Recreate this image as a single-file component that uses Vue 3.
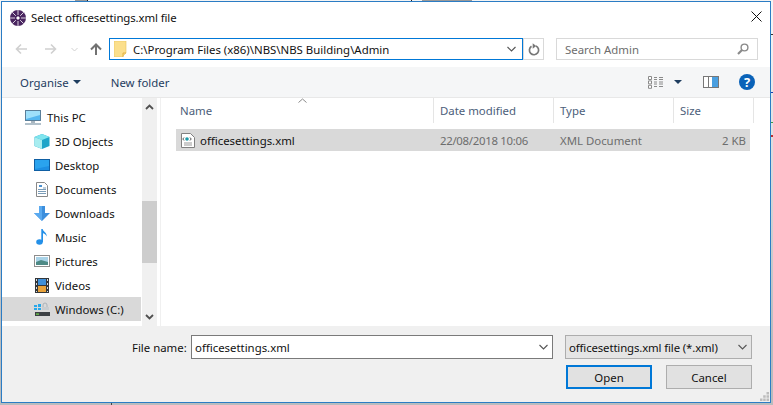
<script setup>
const places = [
  { name: 'This PC', icon: 'pc', top: true },
  { name: '3D Objects', icon: 'cube' },
  { name: 'Desktop', icon: 'desktop' },
  { name: 'Documents', icon: 'docs' },
  { name: 'Downloads', icon: 'down' },
  { name: 'Music', icon: 'music' },
  { name: 'Pictures', icon: 'pics' },
  { name: 'Videos', icon: 'video' },
  { name: 'Windows (C:)', icon: 'drive', selected: true }
]
const columns = ['Name', 'Date modified', 'Type', 'Size']
</script>

<template>
  <div class="screen">
    <section class="win">
      <header class="title">
        <svg class="logo" width="16" height="16" viewBox="0 0 16 16">
          <circle cx="8" cy="8" r="8" fill="#4a2660" />
          <path d="M8 0v5M8 11v5M0 8h5M11 8h5M2.300 2.300l3.500 3.500M10.200 10.200l3.500 3.500M13.700 2.300l-3.500 3.500M5.800 10.200l-3.500 3.500" stroke="#efe9f2" stroke-width=".9" />
          <path d="M8 6L10 8 8 10 6 8z" fill="#fff" />
        </svg>
        <span class="title-text">Select officesettings.xml file</span>
        <svg class="close" width="11" height="11" viewBox="0 0 11 11">
          <path d="M.5.500l10 10M10.500.5l-10 10" stroke="#111" stroke-width="1" fill="none" />
        </svg>
      </header>

      <div class="nav">
        <div class="nav-btns">
          <svg width="12" height="12" viewBox="0 0 12 12"><path d="M12 6H1.500M6 1.500L1.500 6 6 10.500" fill="none" stroke="#d0d0d0" stroke-width="1.600" /></svg>
          <svg class="fwd" width="12" height="12" viewBox="0 0 12 12"><path d="M0 6h10.500M6 1.500L10.500 6 6 10.500" fill="none" stroke="#d0d0d0" stroke-width="1.600" /></svg>
          <svg class="drop" width="7" height="5" viewBox="0 0 7 5"><path d="M.5 1L3.500 4l3-3" fill="none" stroke="#d0d0d0" stroke-width="1" /></svg>
          <svg class="upb" width="12" height="12" viewBox="0 0 12 12"><path d="M6 12V2M1 6.500L6 1.500l5 5" fill="none" stroke="#727272" stroke-width="2" /></svg>
        </div>
        <div class="address">
          <svg class="folder" width="13" height="16" viewBox="0 0 13 16">
            <path d="M0 0h12v12l-4 4H0z" fill="#fbdf8c" stroke="#e8c35a" stroke-width=".6" />
            <path d="M9 16v-4h3" fill="none" stroke="#e0b040" />
          </svg>
          <span class="path">C:\Program Files (x86)\NBS\NBS Building\Admin</span>
          <svg width="9" height="6" viewBox="0 0 9 6"><path d="M.5 1L4.500 5l4-4" fill="none" stroke="#555" stroke-width="1.100" /></svg>
        </div>
        <div class="refresh">
          <svg width="12" height="13" viewBox="0 0 12 13"><path d="M3.500 3.300A4.600 4.600 0 1 0 8 3" fill="none" stroke="#777" stroke-width="1.700" /><path d="M7.300 .3v5.400L3.800 3z" fill="#777" transform="rotate(180 6 3)" /></svg>
        </div>
        <div class="search">
          <span>Search Admin</span>
          <svg width="12" height="12" viewBox="0 0 12 12"><circle cx="7.500" cy="4.500" r="3.400" fill="none" stroke="#8a8a8a" stroke-width="1.400" /><path d="M5 7L1 11" stroke="#8a8a8a" stroke-width="2.200" /></svg>
        </div>
      </div>

      <div class="toolbar">
        <span class="tool">Organise</span>
        <i class="caret" />
        <span class="tool newf">New folder</span>
        <span class="spacer" />
        <svg class="views" width="16" height="13" viewBox="0 0 16 13">
          <g fill="#fff" stroke="#8a8a8a"><path d="M.5.500h3v3h-3zM.5 4.900h3v3h-3zM.5 9.300h3v3h-3z" /></g>
          <path d="M6 1.500h3M11 1.500h4M6 3.500h3M11 3.500h4M6 6h3M11 6h4M6 8h3M11 8h4M6 10.500h3M11 10.500h4" stroke="#8a8a8a" />
        </svg>
        <i class="caret dark" />
        <svg class="panes" width="16" height="12" viewBox="0 0 16 12">
          <rect x=".5" y=".5" width="15" height="11" fill="#fff" stroke="#777" />
          <path d="M5.500 1v10" stroke="#777" />
          <rect x="9" y="1" width="6" height="10" fill="#4a9fe0" />
        </svg>
        <span class="help">?</span>
      </div>

      <div class="main">
        <aside class="side">
          <ul class="places">
            <li v-for="p in places" :key="p.name" class="place" :class="{ top: p.top, sel: p.selected }">
              <svg v-if="p.icon === 'pc'" width="16" height="15" viewBox="0 0 16 15">
                <rect x=".5" y=".5" width="15" height="10" fill="#56b7f0" stroke="#5a7f9a" />
                <path d="M1 1h14v4L1 9z" fill="#9fe0fb" />
                <path d="M6 11h4v2H6z" fill="#a9b6c0" />
                <path d="M0 14h16" stroke="#7f97a8" stroke-width="1.200" />
              </svg>
              <svg v-else-if="p.icon === 'cube'" width="16" height="15" viewBox="0 0 16 15">
                <path d="M8 0l7.500 3v9L8 15 .5 12V3z" fill="#1fa5c9" />
                <path d="M8 0l7.500 3L8 6 .5 3z" fill="#7fe5ee" />
                <path d="M.5 3L8 6v9L.5 12z" fill="#a8edf0" />
              </svg>
              <svg v-else-if="p.icon === 'desktop'" width="16" height="12" viewBox="0 0 16 12">
                <rect x=".5" y=".5" width="15" height="11" fill="#1d8fe3" stroke="#0f5fa3" />
                <path d="M1 1h14v6L1 10z" fill="#2aa3ee" />
              </svg>
              <svg v-else-if="p.icon === 'docs'" width="12" height="15" viewBox="0 0 12 15">
                <path d="M.5.500h8l3 3v11H.5z" fill="#fff" stroke="#888" />
                <path d="M3 3h3v2H3z" fill="#4a90d0" />
                <path d="M7 6h3M2 7.500h8M2 9.500h8M2 11.500h8" stroke="#7a9cb8" />
              </svg>
              <svg v-else-if="p.icon === 'down'" width="16" height="15" viewBox="0 0 16 15">
                <path d="M5 0h6v7h5l-8 8-8-8h5z" fill="#3d8fdd" />
                <path d="M5 0h3v15L0 7h5z" fill="#5aaaf0" />
              </svg>
              <svg v-else-if="p.icon === 'music'" width="12" height="16" viewBox="0 0 12 16">
                <ellipse cx="3.500" cy="13" rx="3.300" ry="2.700" fill="#2490e8" />
                <path d="M5.300 13V0h1.400c.4 3 4.300 3.400 4 7.500-.7-2-2.500-3-3.700-3.200V13z" fill="#2490e8" />
              </svg>
              <svg v-else-if="p.icon === 'pics'" width="16" height="12" viewBox="0 0 16 12">
                <rect x=".5" y=".5" width="15" height="11" fill="#fff" stroke="#8d8d8d" />
                <rect x="2" y="2" width="12" height="8" fill="#a9d3e8" />
                <path d="M2 7l5-2 7 2v3H2z" fill="#4e8a86" />
              </svg>
              <svg v-else-if="p.icon === 'video'" width="14" height="15" viewBox="0 0 14 15">
                <rect width="14" height="15" fill="#33363a" />
                <rect x="3" y="1" width="8" height="6" fill="#3f8fd8" />
                <rect x="3" y="8" width="8" height="6" fill="#e8a23a" />
                <path d="M1 1h1v2H1zM1 5h1v2H1zM1 9h1v2H1zM1 13h1v1H1zM12 1h1v2h-1zM12 5h1v2h-1zM12 9h1v2h-1zM12 13h1v1h-1z" fill="#ddd" />
              </svg>
              <svg v-else width="16" height="15" viewBox="0 0 16 15">
                <path d="M0 3h3v2H0zM4 2h3v3H4zM0 6h3v2H0zM4 6h3v2H4z" fill="#28a8ea" />
                <path d="M9 5V3a2 2 0 0 1 4 0v2" fill="none" stroke="#aab2b8" />
                <rect x="8" y="5" width="7" height="3" fill="#c8cdd0" />
                <rect x="1" y="10" width="15" height="4" fill="#3c4044" />
                <rect x="2" y="11.500" width="3" height="1.200" fill="#6fd84a" />
              </svg>
              <span class="place-name">{{ p.name }}</span>
            </li>
          </ul>
          <div class="vbar">
            <svg class="arrow" width="9" height="6" viewBox="0 0 9 6"><path d="M1 5l3.500-3.500L8 5" fill="none" stroke="#505050" stroke-width="1.800" /></svg>
            <div class="thumb" />
            <svg class="arrow" width="9" height="6" viewBox="0 0 9 6"><path d="M1 1l3.500 3.500L8 1" fill="none" stroke="#505050" stroke-width="1.800" /></svg>
          </div>
        </aside>

        <div class="files">
          <div class="heads">
            <svg class="sort" width="9" height="5" viewBox="0 0 9 5"><path d="M.5 4.500l4-3.500 4 3.500" fill="none" stroke="#8a8a8a" /></svg>
            <div v-for="c in columns" :key="c" class="head">{{ c }}</div>
          </div>
          <div class="row">
            <div class="cell namecell">
              <svg width="14" height="15" viewBox="0 0 14 15">
                <path d="M.5.500h9l4 4v10H.5z" fill="#fff" stroke="#808080" />
                <path d="M3 4.500L1.800 6 3 7.500M9 4.500L10.200 6 9 7.500" fill="none" stroke="#555" />
                <circle cx="6" cy="6" r="1.800" fill="#1c9aa8" />
                <path d="M3 10h8M3 12h8" stroke="#999" />
              </svg>
              <span>officesettings.xml</span>
            </div>
            <div class="cell muted date">22/08/2018 10:06</div>
            <div class="cell muted">XML Document</div>
            <div class="cell muted size">2 KB</div>
          </div>
        </div>
      </div>

      <footer class="foot">
        <div class="foot-row">
          <label class="fname-label">File name:</label>
          <div class="fname">
            <span class="grow">officesettings.xml</span>
            <svg width="9" height="6" viewBox="0 0 9 6"><path d="M.5 1L4.500 5l4-4" fill="none" stroke="#555" stroke-width="1.100" /></svg>
          </div>
          <div class="filter">
            <span class="grow tight">officesettings.xml file (*.xml)</span>
            <svg width="9" height="6" viewBox="0 0 9 6"><path d="M.5 1L4.500 5l4-4" fill="none" stroke="#555" stroke-width="1.100" /></svg>
          </div>
        </div>
        <div class="actions">
          <button class="btn primary">Open</button>
          <button class="btn">Cancel</button>
        </div>
        <svg class="grip" width="9" height="9" viewBox="0 0 9 9">
          <path d="M6.500 0h2.500v2.500H6.500zM3.200 3.200h2.500v2.500H3.200zM6.500 3.200h2.500v2.500H6.500zM0 6.500h2.500v2.500H0zM3.200 6.500h2.500v2.500H3.200zM6.500 6.500h2.500v2.500H6.500z" fill="#bcbcbc" />
        </svg>
      </footer>
    </section>
  </div>
</template>

<style scoped>
.screen {
  width: 773px;
  height: 405px;
  overflow: hidden;
  box-sizing: border-box;
  padding: 1px 2px 2px 1px;
  background:
    linear-gradient(#222, #222) 87px 0 / 1px 1px no-repeat,
    linear-gradient(#222, #222) 411px 0 / 1px 1px no-repeat,
    linear-gradient(#999, #999) 75px 0 / 12px 1px no-repeat,
    linear-gradient(#999, #999) 422px 0 / 50px 1px no-repeat,
    linear-gradient(#444, #444) 111px 403px / 1px 2px no-repeat,
    linear-gradient(#333, #333) 771px 34px / 2px 1px no-repeat,
    linear-gradient(#1a3fb0, #1a3fb0) 771px 92px / 2px 1px no-repeat,
    linear-gradient(#3a9a4a, #3a9a4a) 771px 122px / 2px 1px no-repeat,
    linear-gradient(#c03030, #c03030) 771px 135px / 2px 2px no-repeat,
    linear-gradient(#f4f4f4 0 20px, #b9bcbe 340px);
  font-family: "Noto Sans", "Open Sans", sans-serif;
  font-size: 11.4px;
  color: #111;
}
.win {
  width: 770px;
  height: 402px;
  box-sizing: border-box;
  border: 1px solid #2b7cc4;
  background: #fff;
  display: flex;
  flex-direction: column;
}
.title {
  height: 31px;
  flex: none;
  display: flex;
  align-items: center;
  padding: 0 8px 0 8px;
}
.logo { margin-right: 5px; }
.title-text { flex: 1; letter-spacing: -.1px; }
.close { margin-bottom: 3px; }
.nav {
  height: 34px;
  flex: none;
  display: flex;
  align-items: flex-start;
  padding: 5px 11px 0 13px;
  box-sizing: border-box;
}
.nav-btns {
  width: 94px;
  height: 22px;
  display: flex;
  align-items: center;
}
.fwd { margin-left: 18px; }
.drop { margin-left: 14px; }
.upb { margin-left: 12px; }
.address {
  width: 414px;
  height: 22px;
  box-sizing: border-box;
  border: 1px solid #0078d7;
  display: flex;
  align-items: center;
  padding: 0 6px 0 4px;
}
.folder { margin-right: 6px; }
.path { flex: 1; white-space: nowrap; }
.refresh {
  width: 21px;
  height: 22px;
  box-sizing: border-box;
  border: 1px solid #d9d9d9;
  display: flex;
  align-items: center;
  justify-content: center;
}
.search {
  width: 202px;
  height: 22px;
  margin-left: 12px;
  box-sizing: border-box;
  border: 1px solid #d9d9d9;
  display: flex;
  align-items: center;
  justify-content: space-between;
  padding: 0 8px 0 8px;
  color: #6d6d6d;
}
.toolbar {
  height: 31px;
  flex: none;
  box-sizing: border-box;
  border-bottom: 1px solid #e8e8e8;
  background: #f5f6f7;
  display: flex;
  align-items: center;
  padding: 0 15px 0 18px;
  color: #1e3d5f;
}
.caret {
  width: 0;
  height: 0;
  margin-left: 4px;
  border: 4px solid transparent;
  border-top: 4px solid #1e3d5f;
  border-bottom: 0;
}
.caret.dark { margin-left: 10px; }
.newf { margin-left: 30px; }
.spacer { flex: 1; }
.panes { margin-left: 21px; }
.help {
  width: 16px;
  height: 16px;
  margin-left: 20px;
  border-radius: 50%;
  background: #0a62b8;
  color: #fff;
  font-weight: 700;
  font-size: 13px;
  line-height: 16px;
  text-align: center;
}
.main {
  height: 228px;
  flex: none;
  display: flex;
}
.side {
  width: 155px;
  flex: none;
  display: flex;
}
.places {
  width: 139px;
  margin: 0 1px 0 0;
  padding: 7px 0 0;
  list-style: none;
}
.place {
  height: 24px;
  display: flex;
  align-items: center;
  padding-left: 31px;
  position: relative;
}
.place svg {
  position: absolute;
  left: 40px;
  transform: translateX(-50%);
}
.place.top svg { left: 31px; }
.place.top { padding-left: 45px; }
.place-name { margin-left: 22px; white-space: nowrap; }
.place.top .place-name { margin-left: 0; }
.place.sel { background: #d9d9d9; }
.vbar {
  width: 15px;
  background: #f0f0f0;
  display: flex;
  flex-direction: column;
  align-items: center;
}
.arrow { margin: 6px 0; flex: none; }
.thumb {
  width: 15px;
  height: 62px;
  margin-top: 85px;
  margin-bottom: 45px;
  background: #cdcdcd;
  flex: none;
}
.files {
  flex: 1;
  border-left: 1px solid #f0f0f0;
  margin-left: 3px;
  padding-left: 15px;
}
.heads {
  height: 25px;
  display: grid;
  grid-template-columns: 258px 120px 120px 80px;
  position: relative;
}
.sort {
  position: absolute;
  left: 122px;
  top: 0;
}
.head {
  padding-left: 4px;
  border-right: 1px solid #e5e5e5;
  line-height: 25px;
  color: #4c607a;
}
.head + .head { padding-left: 6px; }
.row {
  width: 574px;
  height: 22px;
  margin-top: 6px;
  background: #d9d9d9;
  display: grid;
  grid-template-columns: 258px 120px 120px 76px;
  align-items: center;
}
.namecell {
  display: flex;
  align-items: center;
  gap: 5px;
  padding-left: 5px;
}
.cell + .cell { padding-left: 6px; }
.muted { color: #6d6d6d; }
.date { letter-spacing: -.3px; }
.size { text-align: right; padding-right: 4px; }
.foot {
  flex: 1;
  background: #f0f0f0;
  position: relative;
  padding: 9px 18px 0 130px;
}
.foot-row {
  display: flex;
  align-items: center;
}
.fname-label { width: 59px; flex: none; }
.fname,
.filter {
  height: 24px;
  box-sizing: border-box;
  display: flex;
  align-items: center;
  padding: 0 4px 0 3px;
}
.fname {
  width: 362px;
  background: #fff;
  border: 1px solid #7a7a7a;
}
.filter {
  width: 187px;
  margin-left: 12px;
  background: #e5e5e5;
  border: 1px solid #adadad;
}
.grow { flex: 1; white-space: nowrap; }
.tight { letter-spacing: -.13px; }
.actions {
  margin-top: 6px;
  display: flex;
  justify-content: flex-end;
  gap: 14px;
}
.btn {
  width: 86px;
  height: 24px;
  background: #e1e1e1;
  border: 1px solid #adadad;
  font: inherit;
  color: #111;
  padding: 0;
}
.primary {
  border: 2px solid #0078d7;
}
.grip {
  position: absolute;
  right: 1px;
  bottom: 1px;
}
</style>

<style>
html, body { margin: 0; padding: 0; background: #fff; }
</style>
